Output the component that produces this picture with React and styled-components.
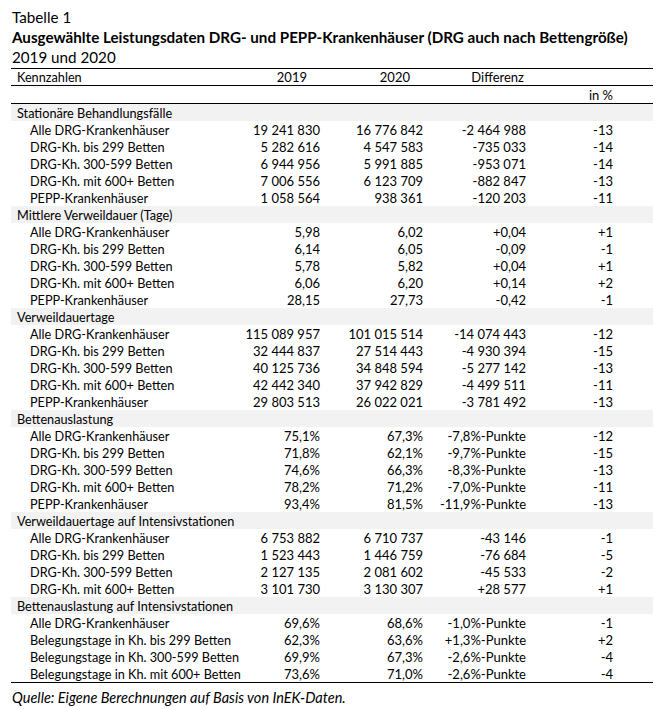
import React from 'react'
import { styled, createGlobalStyle } from 'styled-components'

const SECTIONS = [
  {
    title: 'Stationäre Behandlungsfälle',
    rows: [
      ['Alle DRG-Krankenhäuser', '19 241 830', '16 776 842', '-2 464 988', '-13'],
      ['DRG-Kh. bis 299 Betten', '5 282 616', '4 547 583', '-735 033', '-14'],
      ['DRG-Kh. 300-599 Betten', '6 944 956', '5 991 885', '-953 071', '-14'],
      ['DRG-Kh. mit 600+ Betten', '7 006 556', '6 123 709', '-882 847', '-13'],
      ['PEPP-Krankenhäuser', '1 058 564', '938 361', '-120 203', '-11'],
    ],
  },
  {
    title: 'Mittlere Verweildauer (Tage)',
    rows: [
      ['Alle DRG-Krankenhäuser', '5,98', '6,02', '+0,04', '+1'],
      ['DRG-Kh. bis 299 Betten', '6,14', '6,05', '-0,09', '-1'],
      ['DRG-Kh. 300-599 Betten', '5,78', '5,82', '+0,04', '+1'],
      ['DRG-Kh. mit 600+ Betten', '6,06', '6,20', '+0,14', '+2'],
      ['PEPP-Krankenhäuser', '28,15', '27,73', '-0,42', '-1'],
    ],
  },
  {
    title: 'Verweildauertage',
    rows: [
      ['Alle DRG-Krankenhäuser', '115 089 957', '101 015 514', '-14 074 443', '-12'],
      ['DRG-Kh. bis 299 Betten', '32 444 837', '27 514 443', '-4 930 394', '-15'],
      ['DRG-Kh. 300-599 Betten', '40 125 736', '34 848 594', '-5 277 142', '-13'],
      ['DRG-Kh. mit 600+ Betten', '42 442 340', '37 942 829', '-4 499 511', '-11'],
      ['PEPP-Krankenhäuser', '29 803 513', '26 022 021', '-3 781 492', '-13'],
    ],
  },
  {
    title: 'Bettenauslastung',
    rows: [
      ['Alle DRG-Krankenhäuser', '75,1%', '67,3%', '-7,8%-Punkte', '-12'],
      ['DRG-Kh. bis 299 Betten', '71,8%', '62,1%', '-9,7%-Punkte', '-15'],
      ['DRG-Kh. 300-599 Betten', '74,6%', '66,3%', '-8,3%-Punkte', '-13'],
      ['DRG-Kh. mit 600+ Betten', '78,2%', '71,2%', '-7,0%-Punkte', '-11'],
      ['PEPP-Krankenhäuser', '93,4%', '81,5%', '-11,9%-Punkte', '-13'],
    ],
  },
  {
    title: 'Verweildauertage auf Intensivstationen',
    rows: [
      ['Alle DRG-Krankenhäuser', '6 753 882', '6 710 737', '-43 146', '-1'],
      ['DRG-Kh. bis 299 Betten', '1 523 443', '1 446 759', '-76 684', '-5'],
      ['DRG-Kh. 300-599 Betten', '2 127 135', '2 081 602', '-45 533', '-2'],
      ['DRG-Kh. mit 600+ Betten', '3 101 730', '3 130 307', '+28 577', '+1'],
    ],
  },
  {
    title: 'Bettenauslastung auf Intensivstationen',
    rows: [
      ['Alle DRG-Krankenhäuser', '69,6%', '68,6%', '-1,0%-Punkte', '-1'],
      ['Belegungstage in Kh. bis 299 Betten', '62,3%', '63,6%', '+1,3%-Punkte', '+2'],
      ['Belegungstage in Kh. 300-599 Betten', '69,9%', '67,3%', '-2,6%-Punkte', '-4'],
      ['Belegungstage in Kh. mit 600+ Betten', '73,6%', '71,0%', '-2,6%-Punkte', '-4'],
    ],
  },
]

const GlobalStyle = createGlobalStyle`
  body {
    margin: 0;
    background: #fff;
    color: #000;
    font-family: Lato, "Liberation Sans", sans-serif;
  }
`

const Page = styled.div`
  width: 661px;
  padding: 7px 8px 0 11px;
  box-sizing: border-box;
`

const Caption = styled.div`
  font-size: 15.2px;
  line-height: 20px;
  padding-left: 1px;
  font-weight: ${(p) => (p.$bold ? 700 : 400)};
  white-space: nowrap;
`

const Table = styled.div`
  margin-top: 1px;
  border-top: 1px solid #000;
  border-bottom: 1px solid #000;
  font-size: 13px;
`

const Row = styled.div`
  display: grid;
  grid-template-columns: minmax(0, 1fr) 100px 103px 103px 87px 40px;
  height: ${(p) => p.$h || 17}px;
  align-items: center;
  background: ${(p) => (p.$section ? '#f2f2f2' : 'transparent')};
  border-bottom: ${(p) => (p.$rule ? '1px solid #000' : 'none')};
  white-space: nowrap;
`

const Label = styled.div`
  padding-left: ${(p) => (p.$indent ? 19 : 6)}px;
  font-size: 12.7px;
  overflow: visible;
`

const Num = styled.div`
  text-align: right;
  padding-right: ${(p) => p.$pr || 0}px;
`

const Source = styled.div`
  font-style: italic;
  font-size: 14.5px;
  line-height: 18px;
  padding: 6px 0 0 1px;
`

export default function App() {
  return (
    <Page>
      <GlobalStyle />
      <Caption>Tabelle 1</Caption>
      <Caption $bold>Ausgewählte Leistungsdaten DRG- und PEPP-Krankenhäuser (DRG auch nach Bettengröße)</Caption>
      <Caption>2019 und 2020</Caption>
      <Table>
        <Row $rule $h={16}>
          <Label>Kennzahlen</Label>
          <Num $pr={13}>2019</Num>
          <Num $pr={13}>2020</Num>
          <Num $pr={2}>Differenz</Num>
          <Num />
          <div />
        </Row>
        <Row $rule $h={17}>
          <Label />
          <Num />
          <Num />
          <Num />
          <Num>in %</Num>
          <div />
        </Row>
        {SECTIONS.map((s) => (
          <React.Fragment key={s.title}>
            <Row $section>
              <Label>{s.title}</Label>
            </Row>
            {s.rows.map((r) => (
              <Row key={r[0]}>
                <Label $indent>{r[0]}</Label>
                <Num>{r[1]}</Num>
                <Num>{r[2]}</Num>
                <Num>{r[3]}</Num>
                <Num>{r[4]}</Num>
                <div />
              </Row>
            ))}
          </React.Fragment>
        ))}
      </Table>
      <Source>Quelle: Eigene Berechnungen auf Basis von InEK-Daten.</Source>
    </Page>
  )
}
